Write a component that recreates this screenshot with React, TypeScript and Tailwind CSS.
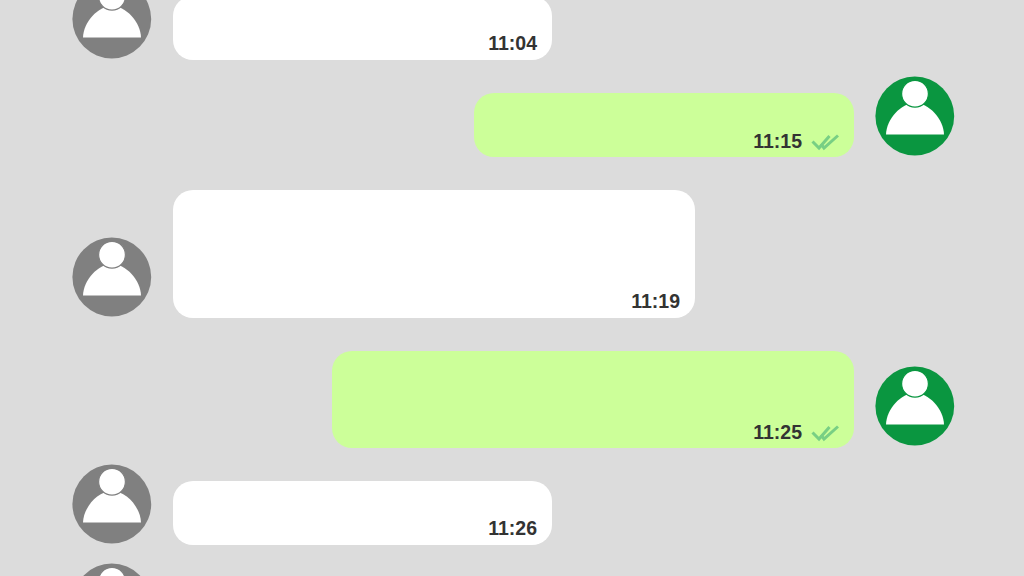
function Avatar({ color, className }: { color: string; className: string }) {
  return (
    <svg viewBox="0 0 80 80" className={`h-20 w-20 shrink-0 ${className}`}>
      <circle cx="39.8" cy="40" r="39.4" fill={color} />
      <path d="M11 58.5C11.5 43 26 27 40 27C54 27 68.5 43 69 58.5Z" fill="#fff" />
      <circle cx="40" cy="17.8" r="13.4" fill="#fff" stroke={color} strokeWidth="1.2" />
    </svg>
  );
}

function Ticks() {
  return (
    <svg viewBox="0 0 28 18" className="h-[18px] w-[28px]" fill="none" stroke="#78cf84" strokeWidth="3">
      <path d="M1.5 8.5L8 15L18.5 3" />
      <path d="M10 11L13 15L27 2.5" />
    </svg>
  );
}

function Left({ time, width, height, gap }: { time?: string; width: string; height: string; gap: string }) {
  return (
    <div className="flex items-end">
      <Avatar color="#808080" className={gap} />
      <div className={`ml-[21px] mt-[17px] flex items-end justify-end rounded-[20px] bg-white px-[15px] pb-[6px] ${width} ${height}`}>
        {time && <span className="text-[19.5px] font-bold leading-[22px] text-[#333]">{time}</span>}
      </div>
    </div>
  );
}

function Right({ time, width, height, gap }: { time: string; width: string; height: string; gap: string }) {
  return (
    <div className="flex items-end justify-end">
      <div className={`mr-[21px] mt-[17px] flex items-end justify-end rounded-[20px] bg-[#ccff99] pb-[5px] pl-[15px] pr-[15px] ${width} ${height}`}>
        <span className="text-[19.5px] font-bold leading-[22px] text-[#333]">{time}</span>
        <span className="ml-[9px] mb-[1px]"><Ticks /></span>
      </div>
      <Avatar color="#0a9640" className={gap} />
    </div>
  );
}

export default function App() {
  return (
    <div className="h-[576px] w-[1024px] overflow-hidden bg-[#dcdcdc] font-['Liberation_Sans',Arial,sans-serif]">
      <div className="-mt-[21px] flex flex-col gap-4 pl-[72px] pr-[69px]">
        <Left time="11:04" width="w-[379px]" height="h-[64px]" gap="mb-px" />
        <Right time="11:15" width="w-[380px]" height="h-[64px]" gap="mb-px" />
        <Left time="11:19" width="w-[522px]" height="h-[128px]" gap="mb-px" />
        <Right time="11:25" width="w-[522px]" height="h-[97px]" gap="mb-[2px]" />
        <Left time="11:26" width="w-[379px]" height="h-[64px]" gap="mb-px" />
        <Left width="w-[379px]" height="h-[64px]" gap="-mb-px" />
      </div>
    </div>
  );
}
